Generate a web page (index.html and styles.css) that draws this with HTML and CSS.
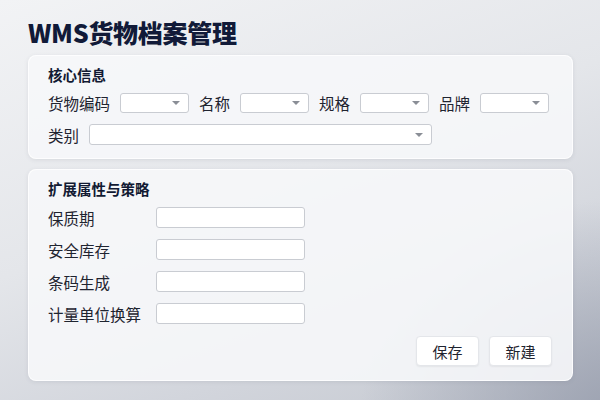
FILE: index.html
```html
<!DOCTYPE html>
<html lang="zh-CN">
<head>
<meta charset="utf-8">
<title>WMS货物档案管理</title>
<link rel="stylesheet" href="styles.css">
</head>
<body>
<div class="page">
  <h1 class="title">WMS货物档案管理</h1>

  <section class="panel panel-core">
    <h2 class="panel-title">核心信息</h2>
    <div class="row">
      <span class="label">货物编码</span>
      <div class="select sm"><span class="caret"></span></div>
      <span class="label">名称</span>
      <div class="select sm"><span class="caret"></span></div>
      <span class="label">规格</span>
      <div class="select sm"><span class="caret"></span></div>
      <span class="label">品牌</span>
      <div class="select sm"><span class="caret"></span></div>
    </div>
    <div class="row row2">
      <span class="label">类别</span>
      <div class="select lg"><span class="caret"></span></div>
    </div>
  </section>

  <section class="panel panel-ext">
    <h2 class="panel-title">扩展属性与策略</h2>
    <div class="form-grid">
      <span class="label">保质期</span><div class="input"></div>
      <span class="label">安全库存</span><div class="input"></div>
      <span class="label">条码生成</span><div class="input"></div>
      <span class="label">计量单位换算</span><div class="input"></div>
    </div>
    <div class="actions">
      <button class="btn">保存</button>
      <button class="btn">新建</button>
    </div>
  </section>
</div>
</body>
</html>
```

FILE: styles.css
```css
* { box-sizing: border-box; }
html, body { margin: 0; padding: 0; }
body {
  width: 600px;
  height: 400px;
  overflow: hidden;
  font-family: "Noto Sans CJK SC", "Noto Sans", sans-serif;
  color: #1f2430;
  background:
    radial-gradient(ellipse 260px 220px at 620px 420px, rgba(150, 156, 172, 0.9), rgba(150, 156, 172, 0) 100%),
    linear-gradient(160deg, #f2f3f5 0%, #e4e6ea 45%, #d2d5dc 75%, #c4c8d0 100%);
}
.page {
  padding: 17px 27px 0 28px;
}
.title {
  margin: 0 0 8px 0;
  font-size: 25px;
  line-height: 30px;
  font-weight: 900;
  color: #111a38;
  letter-spacing: -0.3px;
}
.panel {
  background: rgba(246, 247, 249, 0.9);
  border: 1px solid rgba(255, 255, 255, 0.85);
  border-radius: 8px;
  box-shadow: 0 1px 4px rgba(80, 90, 110, 0.12);
  padding: 9px 20px 13px 19px;
}
.panel-title {
  margin: 0;
  font-size: 14.5px;
  line-height: 20px;
  font-weight: 700;
  color: #121a33;
}
.label {
  font-size: 15.5px;
  line-height: 20px;
  color: #1f2430;
  white-space: nowrap;
}
.row {
  display: flex;
  align-items: center;
  gap: 10px;
  margin-top: 8px;
  height: 20px;
}
.row2 { margin-top: 11px; height: 21px; }
.select {
  position: relative;
  height: 20px;
  background: #fff;
  border: 1px solid #c9ccd2;
  border-radius: 3px;
}
.select.sm { width: 69px; }
.select.lg { width: 343px; height: 21px; }
.caret {
  position: absolute;
  right: 8px;
  top: 50%;
  margin-top: -2px;
  width: 0;
  height: 0;
  border-left: 4px solid transparent;
  border-right: 4px solid transparent;
  border-top: 4px solid #8a8e96;
}
.panel-ext {
  margin-top: 10px;
  padding-bottom: 14px;
}
.form-grid {
  display: grid;
  grid-template-columns: 108px 149px;
  grid-auto-rows: 21px;
  row-gap: 11px;
  align-items: center;
  margin-top: 8px;
}
.input {
  height: 21px;
  background: #fff;
  border: 1px solid #c9ccd2;
  border-radius: 3px;
}
.actions {
  display: flex;
  justify-content: flex-end;
  gap: 10px;
  margin-top: 12px;
}
.btn {
  width: 63px;
  height: 30px;
  font-family: inherit;
  font-size: 15px;
  color: #1f2430;
  background: #fff;
  border: 1px solid #e4e6ea;
  border-radius: 4px;
  box-shadow: 0 1px 2px rgba(0, 0, 0, 0.06);
  padding: 0;
}
```
